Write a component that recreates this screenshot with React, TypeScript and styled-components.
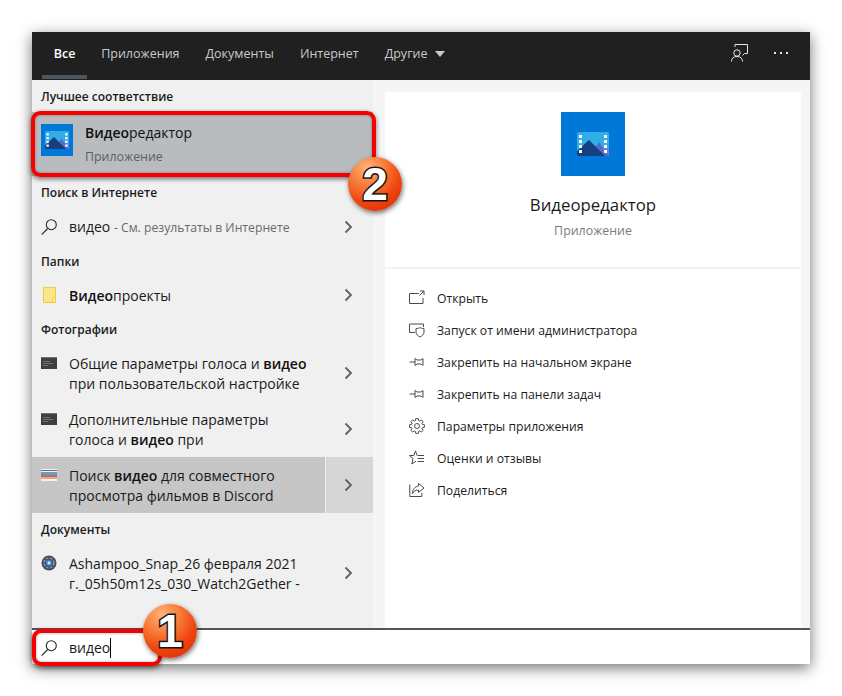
import styled, { createGlobalStyle } from 'styled-components';
import { ReactNode } from 'react';

const GlobalStyle = createGlobalStyle`
  html, body {
    margin: 0;
    padding: 0;
    background: #ffffff;
    font-family: "Open Sans", "Noto Sans", sans-serif;
  }
  * {
    box-sizing: border-box;
  }
`;

const Page = styled.div`
  width: 842px;
  height: 696px;
  padding: 32px;
  overflow: hidden;
`;

const Win = styled.div`
  position: relative;
  width: 778px;
  height: 632px;
  display: flex;
  flex-direction: column;
  background: #f5f5f5;
  box-shadow: 0 4px 14px rgba(0, 0, 0, 0.55);
`;

const TopBar = styled.div`
  height: 48px;
  flex: none;
  display: flex;
  align-items: stretch;
  padding-left: 9px;
  background: #202020;
`;

const Tab = styled.div<{ $active?: boolean }>`
  position: relative;
  display: flex;
  align-items: center;
  gap: 7px;
  padding: 0 ${(p) => (p.$active ? '12.75px' : '13px')} 5px;
  font-size: 12.5px;
  font-weight: ${(p) => (p.$active ? 600 : 400)};
  color: ${(p) => (p.$active ? '#ffffff' : '#c9c9c9')};

  ${(p) =>
    p.$active &&
    `
    &::after {
      content: '';
      position: absolute;
      left: 1px;
      right: 1px;
      bottom: 1px;
      height: 4px;
      background: #4c565b;
    }
  `}
`;

const Caret = styled.span`
  width: 0;
  height: 0;
  border-left: 5.5px solid transparent;
  border-right: 5.5px solid transparent;
  border-top: 6px solid #c9c9c9;
`;

const TopActions = styled.div`
  margin-left: auto;
  display: flex;
  align-items: center;
  gap: 26px;
  padding: 0 21px 6px 0;
`;

const Main = styled.div`
  flex: 1;
  display: flex;
  min-height: 0;
`;

const Results = styled.div`
  width: 341px;
  flex: none;
  background: #f0f0f0;
`;

const SectionTitle = styled.div`
  height: 32px;
  display: flex;
  align-items: center;
  padding-left: 9px;
  font-size: 12px;
  font-weight: 600;
  color: #1b1b1b;
`;

const BestRow = styled.div`
  position: relative;
  height: 64px;
  display: flex;
  align-items: flex-start;
  padding: 12px 0 0 9px;
  background: #b9bcbe;
`;

const BestText = styled.div`
  margin: -1px 0 0 12px;
  display: flex;
  flex-direction: column;
  gap: 5px;
`;

const BestName = styled.div`
  font-size: 14px;
  line-height: 20px;
  color: #111111;

  b {
    font-weight: 600;
  }
`;

const BestKind = styled.div`
  font-size: 12.4px;
  line-height: 18px;
  color: #5c5f61;
`;

const RedFrame = styled.div`
  position: absolute;
  border: 4px solid #f60000;
  border-radius: 9px;
  box-shadow: 0 2px 5px rgba(0, 0, 0, 0.55), inset 0 0 3px rgba(0, 0, 0, 0.35);
  pointer-events: none;
`;

const BestFrame = styled(RedFrame)`
  left: -1px;
  right: -3px;
  top: -1px;
  bottom: -1px;
`;

const SearchFrame = styled(RedFrame)`
  left: 0;
  top: -1px;
  width: 130px;
  height: 37px;
`;

const Badge = styled.div`
  position: absolute;
  width: 54px;
  height: 54px;
  display: flex;
  align-items: center;
  justify-content: center;
  border-radius: 50%;
  background: radial-gradient(circle at 35% 20%, #ffb27a 0%, #f9803c 30%, #ee4510 62%, #d92800 100%);
  box-shadow: 1px 2px 5px rgba(0, 0, 0, 0.55);
  font-family: "Liberation Sans", sans-serif;
  font-size: 46px;
  font-weight: 700;
  color: #ffffff;
  -webkit-text-stroke: 3px #151515;
  paint-order: stroke fill;
`;

const BadgeTwo = styled(Badge)`
  left: 316px;
  top: 45px;
`;

const BadgeOne = styled(Badge)`
  left: 111px;
  top: -26px;
`;

const Row = styled.div<{ $height: number; $hot?: boolean }>`
  height: ${(p) => p.$height}px;
  display: flex;
  background: ${(p) => (p.$hot ? '#c6c6c6' : 'transparent')};
`;

const RowBody = styled.div<{ $top?: boolean }>`
  flex: 1;
  min-width: 0;
  display: flex;
  align-items: ${(p) => (p.$top ? 'flex-start' : 'center')};
  padding: ${(p) => (p.$top ? '8px 0 0 9px' : '0 0 0 9px')};
`;

const RowIcon = styled.div`
  width: 16px;
  height: 20px;
  flex: none;
  margin-right: 12px;
  display: flex;
  align-items: center;
  justify-content: flex-start;
`;

const RowText = styled.div<{ $top?: boolean }>`
  padding-top: ${(p) => (p.$top ? '1px' : '2px')};
  font-size: 14px;
  line-height: 20px;
  color: #1a1a1a;
  white-space: nowrap;

  b {
    font-weight: 600;
    color: #111111;
  }
`;

const Muted = styled.span`
  font-size: 12.2px;
  color: #6a6a6a;
`;

const RowArrow = styled.div<{ $hot?: boolean }>`
  width: 48px;
  flex: none;
  display: flex;
  align-items: center;
  justify-content: center;
  padding-right: 2px;
  border-left: 1px solid ${(p) => (p.$hot ? '#f0f0f0' : 'transparent')};
  background: ${(p) => (p.$hot ? '#d6d6d6' : 'transparent')};
`;

const Detail = styled.div`
  flex: 1;
  min-width: 0;
  padding: 12px 9px 0 12px;
`;

const Card = styled.div`
  height: 536px;
  background: #ffffff;
`;

const Hero = styled.div`
  height: 177px;
  padding-top: 20px;
  display: flex;
  flex-direction: column;
  align-items: center;
  border-bottom: 2px solid #f2f2f2;
`;

const HeroName = styled.div`
  margin-top: 17px;
  font-size: 16.8px;
  line-height: 24px;
  color: #1a1a1a;
`;

const HeroKind = styled.div`
  margin-top: 4px;
  font-size: 12.4px;
  line-height: 20px;
  color: #7b7b7b;
`;

const Actions = styled.div`
  padding: 13px 0 0 24px;
`;

const Action = styled.div`
  height: 32px;
  display: flex;
  align-items: center;
  gap: 12px;
  font-size: 12.2px;
  color: #1c1c1c;
`;

const ActionIcon = styled.svg`
  width: 16px;
  height: 16px;
  flex: none;
  fill: none;
  stroke: #4b4b4b;
  stroke-width: 1;
`;

const SearchBar = styled.div`
  position: relative;
  height: 36px;
  flex: none;
  display: flex;
  align-items: center;
  padding: 2px 0 0 9px;
  background: #ffffff;
  border-top: 2px solid #4f5558;
`;

const SearchValue = styled.div`
  margin-left: 12px;
  font-size: 14px;
  color: #1a1a1a;
  border-right: 1px solid #000000;
  line-height: 20px;
`;

const Chevron = () => (
  <svg width="9" height="14" viewBox="0 0 9 14" fill="none">
    <path d="M1.5 1.5 7 7l-5.5 5.5" stroke="#5f5f5f" strokeWidth="1.8" />
  </svg>
);

const Magnifier = () => (
  <svg width="16" height="16" viewBox="0 0 16 16" fill="none">
    <circle cx="10.300" cy="5.700" r="5" stroke="#2a2a2a" strokeWidth="1.1" />
    <path d="M6.700 9.500 .7 15.600" stroke="#2a2a2a" strokeWidth="1.2" />
  </svg>
);

// film strip with mountains, drawn for the 64px tile and scaled down for the list
const AppGlyph = ({ size, zoom }: { size: number; zoom: number }) => (
  <svg width={size} height={size} viewBox="0 0 64 64">
    <rect width="64" height="64" fill="#0078d7" />
    <g transform={`translate(32 32) scale(${zoom}) translate(-16 -12)`}>
      <rect width="32" height="24" rx="1.500" fill="#33ade8" />
      <path d="M22 24 29 14l3 3v7z" fill="#6f7fe0" />
      <path d="M12 24 22 10l10 14z" fill="#4f6fc8" />
      <path d="M0 19 12 8l16 16H1.500A1.500 1.500 0 0 1 0 22.500z" fill="#173f7d" />
      {[3, 8, 13, 18].map((y) => (
        <g key={y} fill="#ffffff">
          <rect x="2" y={y} width="3" height="3" />
          <rect x="27" y={y} width="3" height="3" />
        </g>
      ))}
    </g>
  </svg>
);

const Folder = () => (
  <svg width="16" height="16" viewBox="-2 0 16 16">
    <path d="M.5.5h12v15H.5z" fill="#fde68a" stroke="#eccb45" />
    <path d="M10 10.500h2.500v5H10z" fill="#fff1b8" stroke="#eccb45" />
  </svg>
);

const Thumb = ({ children }: { children: ReactNode }) => (
  <svg width="16" height="12" viewBox="0 0 16 12">
    {children}
  </svg>
);

const DarkThumb = () => (
  <Thumb>
    <rect width="16" height="12" fill="#3d3f43" />
    <rect width="16" height="1" fill="#6e7074" />
    <path d="M2 4.500h7M2 6.500h10M2 8.500h5" stroke="#6f7175" strokeWidth="1" />
  </Thumb>
);

const PhotoThumb = () => (
  <Thumb>
    <rect width="16" height="12" fill="#f2f2f2" />
    <rect y="1" width="16" height="1" fill="#6b6b6b" />
    <rect y="3" width="16" height="3" fill="#5a9fd8" />
    <rect y="6" width="16" height="2" fill="#c86a50" />
    <rect y="8" width="16" height="2" fill="#e0a898" />
  </Thumb>
);

const DiscIcon = () => (
  <svg width="16" height="16" viewBox="0 0 16 16">
    <circle cx="8" cy="8" r="7.500" fill="#454f5c" />
    <circle cx="8" cy="8" r="5" fill="none" stroke="#9aa5b2" strokeWidth="1.2" strokeDasharray="2.500 1.500" />
    <circle cx="8" cy="8" r="3.200" fill="#3f83d8" />
    <circle cx="8" cy="8" r="1.400" fill="#dfe9f5" />
  </svg>
);

const FeedbackIcon = () => (
  <svg width="17" height="18" viewBox="0 0 17 18" fill="none" stroke="#e6e6e6" strokeWidth="1">
    <path d="M4 3V.5h12.500v9H13.500l-2 2" />
    <circle cx="6" cy="9" r="3.200" />
    <path d="M.5 17.500c0-3.500 2.200-5 5.500-5s5.500 1.500 5.500 5" />
  </svg>
);

const Dots = () => (
  <svg width="15" height="3" viewBox="0 0 15 3" fill="#e6e6e6">
    <rect width="2" height="2" />
    <rect x="6" width="2" height="2" />
    <rect x="12" width="2" height="2" />
  </svg>
);

const gearPath = () => {
  const pts: string[] = [];
  for (let i = 0; i < 8; i++) {
    const a = (i * Math.PI) / 4;
    [
      [-0.3, 5.6],
      [-0.17, 7.5],
      [0.17, 7.5],
      [0.3, 5.6],
    ].forEach(([d, r]) => {
      pts.push(`${(8 + r * Math.cos(a + d)).toFixed(2)} ${(8 + r * Math.sin(a + d)).toFixed(2)}`);
    });
  }
  return `M${pts.join('L')}Z`;
};

const PinPath = 'M.5 8H6M6 4.500l2 1.500h4l2-1.500v7l-2-1.500H8l-2 1.500z';

const actions: { label: string; icon: ReactNode }[] = [
  {
    label: 'Открыть',
    icon: <path d="M10 3.500H.5v10h13.500V8M11 1h4v4M15 1l-4.500 4.500" />,
  },
  {
    label: 'Запуск от имени администратора',
    icon: (
      <>
        <path d="M6 10.500H.5V2h14v3" />
        <path d="M7 6.500c2 0 3.500-.5 4-1 .5.500 2 1 4 1v3.500c0 2.500-2 4-4 5-2-1-4-2.500-4-5z" />
      </>
    ),
  },
  { label: 'Закрепить на начальном экране', icon: <path d={PinPath} /> },
  { label: 'Закрепить на панели задач', icon: <path d={PinPath} /> },
  {
    label: 'Параметры приложения',
    icon: (
      <>
        <circle cx="8" cy="8" r="2.500" />
        <path d={gearPath()} />
      </>
    ),
  },
  {
    label: 'Оценки и отзывы',
    icon: (
      <>
        <path d="M8 5.500 6.500.8 4.800 5.500H.5L4 8.500 2.800 14l4.200-2.800" />
        <path d="M8.500 5.500H15M8.500 8.500H15M8.500 11.500H15" />
      </>
    ),
  },
  {
    label: 'Поделиться',
    icon: (
      <>
        <path d="M.8 2.500V14.500h12V11" />
        <path d="M9.500 1.500 15 6l-5.500 4.500V8C7 8 4.500 9 3.500 11.500 3.500 7.500 6 4.500 9.500 4z" />
      </>
    ),
  },
];

export default function App() {
  return (
    <Page>
      <GlobalStyle />
      <Win>
        <TopBar>
          <Tab $active>Все</Tab>
          <Tab>Приложения</Tab>
          <Tab>Документы</Tab>
          <Tab>Интернет</Tab>
          <Tab>
            Другие
            <Caret />
          </Tab>
          <TopActions>
            <FeedbackIcon />
            <Dots />
          </TopActions>
        </TopBar>
        <Main>
          <Results>
            <SectionTitle>Лучшее соответствие</SectionTitle>
            <BestRow>
              <AppGlyph size={32} zoom={1.5} />
              <BestText>
                <BestName>
                  <b>Видео</b>редактор
                </BestName>
                <BestKind>Приложение</BestKind>
              </BestText>
              <BestFrame />
              <BadgeTwo>2</BadgeTwo>
            </BestRow>
            <SectionTitle>Поиск в Интернете</SectionTitle>
            <Row $height={37}>
              <RowBody>
                <RowIcon>
                  <Magnifier />
                </RowIcon>
                <RowText>
                  видео <Muted>- См. результаты в Интернете</Muted>
                </RowText>
              </RowBody>
              <RowArrow>
                <Chevron />
              </RowArrow>
            </Row>
            <SectionTitle>Папки</SectionTitle>
            <Row $height={36}>
              <RowBody>
                <RowIcon>
                  <Folder />
                </RowIcon>
                <RowText>
                  <b>Видео</b>проекты
                </RowText>
              </RowBody>
              <RowArrow>
                <Chevron />
              </RowArrow>
            </Row>
            <SectionTitle>Фотографии</SectionTitle>
            <Row $height={56}>
              <RowBody $top>
                <RowIcon>
                  <DarkThumb />
                </RowIcon>
                <RowText $top>
                  Общие параметры голоса и <b>видео</b>
                  <br />
                  при пользовательской настройке
                </RowText>
              </RowBody>
              <RowArrow>
                <Chevron />
              </RowArrow>
            </Row>
            <Row $height={56}>
              <RowBody $top>
                <RowIcon>
                  <DarkThumb />
                </RowIcon>
                <RowText $top>
                  Дополнительные параметры
                  <br />
                  голоса и <b>видео</b> при
                </RowText>
              </RowBody>
              <RowArrow>
                <Chevron />
              </RowArrow>
            </Row>
            <Row $height={56} $hot>
              <RowBody $top>
                <RowIcon>
                  <PhotoThumb />
                </RowIcon>
                <RowText $top>
                  Поиск <b>видео</b> для совместного
                  <br />
                  просмотра фильмов в Discord
                </RowText>
              </RowBody>
              <RowArrow $hot>
                <Chevron />
              </RowArrow>
            </Row>
            <SectionTitle>Документы</SectionTitle>
            <Row $height={56}>
              <RowBody $top>
                <RowIcon>
                  <DiscIcon />
                </RowIcon>
                <RowText $top>
                  Ashampoo_Snap_26 февраля 2021
                  <br />
                  г._05h50m12s_030_Watch2Gether -
                </RowText>
              </RowBody>
              <RowArrow>
                <Chevron />
              </RowArrow>
            </Row>
          </Results>
          <Detail>
            <Card>
              <Hero>
                <AppGlyph size={64} zoom={1} />
                <HeroName>Видеоредактор</HeroName>
                <HeroKind>Приложение</HeroKind>
              </Hero>
              <Actions>
                {actions.map((a) => (
                  <Action key={a.label}>
                    <ActionIcon viewBox="0 0 16 16">{a.icon}</ActionIcon>
                    {a.label}
                  </Action>
                ))}
              </Actions>
            </Card>
          </Detail>
        </Main>
        <SearchBar>
          <Magnifier />
          <SearchValue>видео</SearchValue>
          <SearchFrame />
          <BadgeOne>1</BadgeOne>
        </SearchBar>
      </Win>
    </Page>
  );
}
